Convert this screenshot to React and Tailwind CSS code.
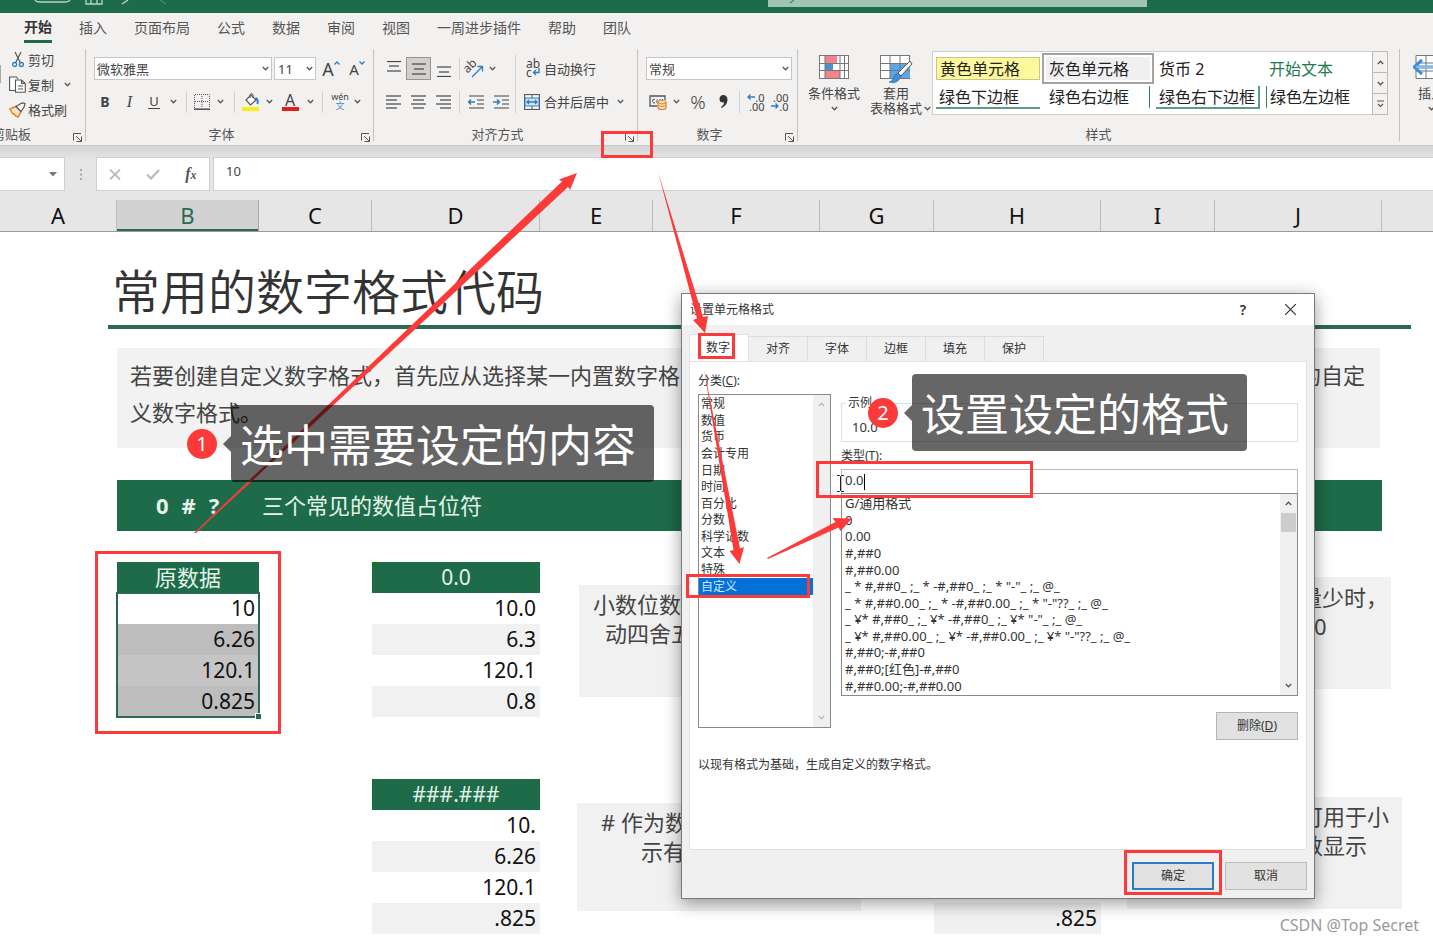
import React from "react";

const CJK = "font-['Noto_Sans','Noto_Sans_CJK_SC',sans-serif]";

function Chevron({ className = "w-3", up = false, color = "#555" }) {
  return (
    <span className={`flex shrink-0 items-center justify-center ${className}`}>
      <svg width="7" height="5" viewBox="0 0 7 5" fill="none" stroke={color} strokeWidth="1.3">
        <path d={up ? "M0.8 4L3.5 1.2L6.2 4" : "M0.8 1L3.5 3.8L6.2 1"} />
      </svg>
    </span>
  );
}

function Tool({ label, className = "w-6", children }) {
  return (
    <button aria-label={label} className={`flex h-[23px] shrink-0 items-center justify-center ${className}`}>
      {children}
    </button>
  );
}

function Sep({ className = "w-3" }) {
  return (
    <span className={`flex h-[22px] shrink-0 justify-center ${className}`}>
      <span className="w-px bg-[#d2d0ce]" />
    </span>
  );
}

function Launcher() {
  return (
    <button aria-label="更多选项" className="flex h-4 w-[16px] shrink-0 items-center justify-center pt-[8px]">
      <svg className="shrink-0" width="9" height="9" viewBox="0 0 9 9" fill="none" stroke="#555" strokeWidth="1">
        <path d="M0.5 7.5V0.5H8" />
        <path d="M3 3L8 8M8.5 3.5V8.5H3.5" />
      </svg>
    </button>
  );
}

function Group({ title, className = "", launcher = true, children }) {
  return (
    <section className={`flex h-[92px] shrink-0 flex-col justify-between border-r border-[#c4c2c0] ${className}`}>
      {children}
      <div className="flex h-[15px] items-center text-[13px] leading-4 text-[#555]">
        <span className="flex-1 text-center">{title}</span>
        {launcher && <Launcher />}
      </div>
    </section>
  );
}

function Lines({ rows }) {
  return (
    <svg width="16" height="16" viewBox="0 0 16 16" stroke="#444" strokeWidth="1.2">
      {rows.map(([y, a, b]) => (
        <path key={y} d={`M${a} ${y}H${b}`} />
      ))}
    </svg>
  );
}

const TABS = ["插入", "页面布局", "公式", "数据", "审阅", "视图", "一周进步插件", "帮助", "团队"];

function TitleBar() {
  return (
    <header className="flex h-[13px] shrink-0 items-start bg-[#1d6b48]">
      <svg className="ml-[34px] shrink-0" width="140" height="7" fill="none" stroke="#b9d6c6" strokeWidth="1.3">
        <path d="M1 0Q2 2 6 2H30Q35 2 36 0" />
        <path d="M52 0V4H68V0M57 4V0M63 4V0" />
        <path d="M88 4L94 0" />
        <path d="M126 0L132 4" stroke="#4a8a6b" />
      </svg>
      <div className="ml-[594px] flex h-[7px] w-[379px] shrink-0 bg-[#a0c5b1] pl-[22px]">
        <svg width="8" height="4" stroke="#1d6b48" strokeWidth="1"><path d="M0 3L4 0" /></svg>
      </div>
    </header>
  );
}

function MenuTabs() {
  return (
    <nav className="flex h-[30px] shrink-0 items-center gap-[27px] pl-[24px] text-[14px] text-[#555] whitespace-nowrap">
      <button className="flex h-full flex-col justify-between pt-1 font-bold text-[#333]">
        <span className="leading-5">开始</span>
        <span className="h-[3px] w-[28px] bg-[#1d6b48]" />
      </button>
      {TABS.map((t) => (
        <button key={t} className="leading-5">{t}</button>
      ))}
    </nav>
  );
}

function Clipboard() {
  return (
    <Group title="剪贴板" className="-ml-[46px] w-[132px]">
      <div className="flex pt-px text-[13px] text-[#444]">
        <svg className="mt-[15px] shrink-0" width="47" height="20"><path d="M46.500 0V18H30V0Z" fill="none" stroke="#aaa" /></svg>
        <div className="flex flex-col pl-[8px]">
          <button className="flex h-[25px] items-center gap-[4px] pl-[3px] leading-4 -mt-[3px]">
            <svg width="12" height="17" viewBox="0 0 12 17" fill="none">
              <path d="M3 1L8.500 12M9 1L3.500 12" stroke="#555" strokeWidth="1.2" />
              <circle cx="2.600" cy="13.500" r="2" stroke="#2b7cc0" strokeWidth="1.300" />
              <circle cx="9.400" cy="13.500" r="2" stroke="#2b7cc0" strokeWidth="1.300" />
            </svg>
            剪切
          </button>
          <button className="flex h-[25px] items-center gap-[2px] leading-4">
            <svg width="17" height="17" viewBox="0 0 17 17" fill="#fff" stroke="#555" strokeWidth="1.1">
              <path d="M6 14.500H0.600V1H7.500L9 3" />
              <path d="M6.500 4H12.500L16.300 7.500V16.300H6.500ZM12.500 4V7.500H16.300M9 10H14M9 13H14" />
            </svg>
            复制
            <Chevron className="ml-[6px] w-[10px]" />
          </button>
          <button className="flex h-[25px] items-center gap-[2px] leading-4">
            <svg width="17" height="16" viewBox="0 0 17 16">
              <path d="M1 7L7 4.500L12 9.500L9 15L6.500 14L5 12L3.500 11.500Z" fill="#fbe3c8" stroke="#e08326" strokeWidth="1.500" />
              <path d="M7 4.500L9.500 3L13 1L16 1.500L15 5L13.500 7.500L12 9.500Z" fill="#fff" stroke="#555" strokeWidth="1.200" />
            </svg>
            格式刷
          </button>
        </div>
      </div>
    </Group>
  );
}

function FontGroup() {
  return (
    <Group title="字体" className="w-[288px]">
      <div className="flex flex-col gap-[10px] pt-[8px] text-[#444]">
        <div className="flex h-[23px] items-center pl-[8px]">
          <button className="flex h-[23px] w-[178px] items-center justify-between border border-[#c8c6c4] bg-white pr-px pl-[2px] text-[13px] leading-4">
            微软雅黑 <Chevron className="w-[10px]" />
          </button>
          <button className="ml-[2px] flex h-[23px] w-[42px] items-center justify-between border border-[#c8c6c4] bg-white pr-px pl-[3px] text-[13px] leading-4">
            11 <Chevron className="w-[10px]" />
          </button>
          <Tool label="增大字号" className="w-[30px]">
            <span className="text-[18px] leading-5">A</span>
            <svg className="mb-3" width="6" height="4" fill="none" stroke="#2b7cc0" strokeWidth="1.300"><path d="M0.500 3.500L3 1L5.500 3.500" /></svg>
          </Tool>
          <Tool label="减小字号" className="w-[22px]">
            <span className="text-[15px] leading-4">A</span>
            <svg className="mb-3" width="6" height="4" fill="none" stroke="#2b7cc0" strokeWidth="1.300"><path d="M0.500 0.500L3 3L5.500 0.500" /></svg>
          </Tool>
        </div>
        <div className="flex h-[23px] items-center pl-[7px]">
          <Tool label="加粗"><span className="text-[14px] leading-5 font-bold">B</span></Tool>
          <Tool label="倾斜" className="w-[25px]"><span className="font-['Liberation_Serif',serif] text-[16px] leading-5 italic">I</span></Tool>
          <Tool label="下划线"><span className="border-b border-[#444] px-px text-[13px] leading-[14px]">U</span></Tool>
          <Chevron className="w-[14px]" />
          <Sep className="w-[13px]" />
          <Tool label="边框" className="w-[18px]">
            <svg width="16" height="16" viewBox="0 0 16 16" stroke="#555" fill="none">
              <path d="M0.500 14V0.500H15.500V14M8 2V14M1 7.500H15" strokeDasharray="1 1" />
              <path d="M0 15.200H16" strokeWidth="1.600" />
            </svg>
          </Tool>
          <Chevron className="w-[18px]" />
          <Sep className="w-[11px]" />
          <Tool label="填充颜色" className="w-[22px]">
            <svg width="18" height="18" viewBox="0 0 18 18" fill="none">
              <path d="M4 7L9 2L14 7L8.500 12Z" stroke="#555" strokeWidth="1.200" fill="#fff" />
              <path d="M8 5V1.500Q9.500 -0.500 11 1.500V5" stroke="#555" />
              <path d="M13.500 5Q16.500 6 15.500 11" stroke="#2b7cc0" strokeWidth="2" />
              <rect x="0" y="14" width="17" height="4" fill="#fbec1c" />
            </svg>
          </Tool>
          <Chevron className="w-[14px]" />
          <Tool label="字体颜色" className="w-[28px]">
            <span className="flex w-[17px] flex-col items-center">
              <span className="text-[16px] leading-[14px]">A</span>
              <span className="h-[4px] w-full bg-[#e0211b]" />
            </span>
          </Tool>
          <Chevron className="w-3" />
          <Sep className="w-[13px]" />
          <Tool label="拼音指南" className="w-[22px]">
            <span className="flex flex-col items-center">
              <span className="text-[9px] leading-[8px]">wén</span>
              <span className="text-[9px] leading-[9px] text-[#4a90cf]">文</span>
            </span>
          </Tool>
          <Chevron className="w-[12px]" />
        </div>
      </div>
    </Group>
  );
}

function Indent({ right }) {
  return (
    <svg width="16" height="16" viewBox="0 0 16 16" stroke="#444" strokeWidth="1.200" fill="none">
      <path d="M1 2H16M9 6H16M9 10H16M1 14H16" />
      <path d={right ? "M0 8H6M4 5.500L6.500 8L4 10.500" : "M7 8H1M3 5.500L0.500 8L3 10.500"} stroke="#2b7cc0" strokeWidth="1.500" />
    </svg>
  );
}

function AlignGroup() {
  return (
    <Group title="对齐方式" className="w-[264px]">
      <div className="flex pt-[6px] text-[13px] text-[#444]">
        <div className="flex w-[142px] flex-col gap-[10px] border-r border-[#d2d0ce] pt-[2px] pl-[7px]">
          <div className="flex h-[23px] items-center">
            <Tool label="顶端对齐" className="w-[25px]"><Lines rows={[[0.5, 1, 15], [5, 3, 13], [10, 1, 15]]} /></Tool>
            <Tool label="垂直居中" className="w-[25px] border border-[#979593] bg-[#d2d0ce]"><Lines rows={[[3, 1, 15], [8, 3, 13], [13, 1, 15]]} /></Tool>
            <Tool label="底端对齐" className="w-[25px]"><Lines rows={[[6, 1, 15], [11, 3, 13], [15.5, 1, 15]]} /></Tool>
            <Sep className="w-[7px]" />
            <Tool label="方向" className="w-[24px]">
              <svg className="overflow-visible" width="18" height="18" viewBox="0 0 18 18" fill="none">
                <text x="0" y="12" fontSize="12" fill="#444" transform="rotate(-45 3 11)">ab</text>
                <path d="M6 17L16 7M11.500 6.500H16.500V11.500" stroke="#2b7cc0" strokeWidth="1.300" />
              </svg>
            </Tool>
            <Chevron className="w-[10px]" />
          </div>
          <div className="flex h-[23px] items-center">
            <Tool label="左对齐" className="w-[25px]"><Lines rows={[[2, 0, 15], [6, 0, 11], [10, 0, 15], [14, 0, 11]]} /></Tool>
            <Tool label="居中" className="w-[25px]"><Lines rows={[[2, 0, 15], [6, 2, 13], [10, 0, 15], [14, 2, 13]]} /></Tool>
            <Tool label="右对齐" className="w-[25px]"><Lines rows={[[2, 0, 15], [6, 4, 15], [10, 0, 15], [14, 4, 15]]} /></Tool>
            <Sep className="w-[7px]" />
            <Tool label="减少缩进量" className="w-[25px]"><Indent /></Tool>
            <Tool label="增加缩进量" className="w-[25px]"><Indent right /></Tool>
          </div>
        </div>
        <div className="flex flex-col gap-[10px] pt-[2px] pl-[8px]">
          <button className="flex h-[23px] items-center gap-[3px] pl-[2px] leading-4">
            <span className="flex w-[15px] flex-col items-start text-[12px] leading-[9px]">
              <span className="leading-[8px]">ab</span>
              <span className="flex items-center leading-[9px]">
                c
                <svg width="8" height="9" viewBox="0 0 8 9" fill="none"><path d="M7 0V4.500H1.500M4 2L1.500 4.500L4 7" stroke="#2b7cc0" strokeWidth="1.400" /></svg>
              </span>
            </span>
            自动换行
          </button>
          <button className="flex h-[23px] items-center gap-[4px] leading-4">
            <svg width="16" height="16" viewBox="0 0 16 16" fill="none">
              <rect x="0.600" y="0.600" width="14.800" height="14.800" stroke="#555" fill="#fff" strokeWidth="1.100" />
              <rect x="1" y="4" width="14" height="8" fill="#d3e7f7" stroke="#2b7cc0" />
              <path d="M8 1V4M8 12V15" stroke="#555" />
              <path d="M3 8H13M5 6L3 8L5 10M11 6L13 8L11 10" stroke="#2b7cc0" strokeWidth="1.300" />
            </svg>
            合并后居中
            <Chevron className="ml-px w-[12px]" />
          </button>
        </div>
      </div>
    </Group>
  );
}

function Decimal({ more }) {
  const arrow = (
    <svg width="8" height="8" viewBox="0 0 8 8" fill="none" stroke="#2b7cc0" strokeWidth="1.300">
      <path d={more ? "M8 4H1M3.500 1.500L1 4L3.500 6.500" : "M0 4H7M4.500 1.500L7 4L4.500 6.500"} />
    </svg>
  );
  return (
    <span className="flex w-[17px] flex-col items-end text-[11px] leading-[9px]">
      <span className="flex items-center leading-[9px]">{more && arrow}{more ? ".0" : ".00"}</span>
      <span className="flex items-center leading-[9px]">{!more && arrow}{more ? ".00" : ".0"}</span>
    </span>
  );
}

function NumberGroup() {
  return (
    <Group title="数字" className="w-[160px]">
      <div className="flex flex-col gap-[10px] pt-[8px] pl-[8px] text-[13px] text-[#444]">
        <button className="flex h-[23px] w-[146px] items-center justify-between border border-[#c8c6c4] bg-white pr-px pl-[2px] leading-4">
          常规 <Chevron className="w-[10px]" />
        </button>
        <div className="flex h-[23px] items-center">
          <Tool label="会计数字格式">
            <svg width="18" height="16" viewBox="0 0 18 16" fill="none">
              <path d="M16 6V2H1V12H8" stroke="#555" strokeWidth="1.300" />
              <path d="M6 5.500Q3 5 3.500 7.500Q4 9.500 6 9M8 5.500V9M11 5V6M13.500 5V6" stroke="#555" />
              <path d="M9 8.500Q9 6.500 13 6.500Q17 6.500 17 8.500V13.500Q17 15.500 13 15.500Q9 15.500 9 13.500Z" fill="#fbe3c8" stroke="#e08326" strokeWidth="1.200" />
              <path d="M9 9Q13 11 17 9M9 11.500Q13 13.500 17 11.500" stroke="#e08326" />
            </svg>
          </Tool>
          <Chevron className="w-3" />
          <Tool label="百分比样式" className="w-8"><span className="text-[19px] leading-5 font-light">%</span></Tool>
          <Tool label="千位分隔样式" className="w-[18px]">
            <svg width="9" height="13" viewBox="0 0 9 13" fill="#333"><path d="M4 0Q8.500 0 8.500 5Q8 10.500 2.500 13L2 12Q5 10 5.300 7.500Q0.500 8 0.500 4Q0.800 0.300 4 0Z" /></svg>
          </Tool>
          <Sep className="w-[14px]" />
          <Tool label="增加小数位数" className="w-5"><Decimal more /></Tool>
          <Tool label="减少小数位数" className="w-7"><Decimal /></Tool>
        </div>
      </div>
    </Group>
  );
}

function CellStyle({ className = "", children }) {
  return <button className={`h-[23px] pl-[3px] text-left whitespace-nowrap ${className}`}>{children}</button>;
}

function StylesGroup() {
  return (
    <Group title="样式" launcher={false} className="w-[602px]">
      <div className="flex pt-[2px]">
        <button className="flex w-[72px] flex-col items-center pt-[4px] text-[13px] leading-[15px] text-[#444]">
          <svg width="30" height="24" viewBox="0 0 30 24" fill="none">
            <rect x="0.500" y="0.500" width="29" height="23" fill="#fff" stroke="#777" />
            <rect x="6" y="1" width="12" height="7" fill="#f4828b" />
            <rect x="6" y="9" width="8" height="6" fill="#4a90cf" />
            <rect x="6" y="16" width="15" height="7" fill="#f4828b" />
            <path d="M0 8.500H30M0 15.500H30M6 0V24M21 0V24M25.500 0V24" stroke="#777" />
          </svg>
          <span className="mt-[7px]">条件格式</span>
          <Chevron className="h-[15px] w-3" />
        </button>
        <button className="flex w-[62px] flex-col items-center pt-[4px] pr-[10px] text-[13px] leading-[15px] text-[#444] whitespace-nowrap">
          <svg className="shrink-0 overflow-visible" width="32" height="24" viewBox="0 0 32 24" fill="none">
            <rect x="0.500" y="0.500" width="29" height="23" fill="#fff" stroke="#777" />
            <rect x="10" y="8" width="20" height="15" fill="#5aa7e8" />
            <path d="M0 8.500H30M0 15.500H30M10 0V24M20 0V24" stroke="#777" />
            <path d="M30 6L18 18L21 21L32 9Z" fill="#f4f4f4" stroke="#555" />
            <path d="M18 18Q14 19 13 24Q11 27 9 27Q18 30 21 21Z" fill="#3e8fd8" stroke="#2b6fae" strokeWidth="0.600" />
          </svg>
          <span className="mt-[7px]">套用</span>
          <span className="flex">表格格式<Chevron className="-mr-[10px] w-[10px]" /></span>
        </button>
        <div className="flex h-[64px] w-[456px] border border-[#d0cecc] bg-white">
          <div className="grid flex-1 grid-cols-[repeat(4,104px)] content-start justify-start gap-[6px] pt-[5px] pl-[3px] text-[16px] leading-[18px] text-[#222]">
            <CellStyle className="border border-[#c9c68a] bg-[#fdf89b]">黄色单元格</CellStyle>
            <CellStyle className="bg-[#f1f0f1] outline-2 outline-offset-2 outline-[#a3a3a3]">灰色单元格</CellStyle>
            <CellStyle>货币 2</CellStyle>
            <CellStyle className="text-[#1d7a50]">开始文本</CellStyle>
            <CellStyle className="border-b-2 border-[#5c9c84]">绿色下边框</CellStyle>
            <CellStyle className="border-r border-b-2 border-r-[#2f8062] border-b-white">绿色右边框</CellStyle>
            <CellStyle className="border-r-2 border-b-2 border-[#5c9c84]">绿色右下边框</CellStyle>
            <CellStyle className="border-b-2 border-l border-b-white border-l-[#2f8062]">绿色左边框</CellStyle>
          </div>
          <div className="-my-px -mr-px flex w-[16px] flex-col border border-[#bdbbb9] bg-[#f3f2f1]">
            <button aria-label="上一行" className="flex flex-1 justify-center border-b border-[#bdbbb9]"><Chevron up className="w-3" /></button>
            <button aria-label="下一行" className="flex flex-1 justify-center border-b border-[#bdbbb9]"><Chevron className="w-3" /></button>
            <button aria-label="其他样式" className="flex flex-1 items-center justify-center">
              <svg width="7" height="8" fill="none" stroke="#555" strokeWidth="1.200"><path d="M0 1H7M1 4L3.500 6.500L6 4" /></svg>
            </button>
          </div>
        </div>
      </div>
    </Group>
  );
}

function CellsGroup() {
  return (
    <section className="flex flex-1 justify-start overflow-hidden pl-[13px]">
      <button className="flex w-9 shrink-0 flex-col items-center pt-[6px] text-[13px] leading-[15px] text-[#444] whitespace-nowrap">
        <svg width="36" height="24" viewBox="0 0 36 24" fill="none">
          <path d="M3 0.500H35V23.500H3ZM3 8H35M3 16H35M13 0V24M24 0V24" stroke="#777" fill="#fff" />
          <path d="M1 12H34M9 5L1 12L9 19" stroke="#3e8fd8" strokeWidth="3" />
          <path d="M3 12H34" stroke="#cfe5f7" />
        </svg>
        <span className="mt-[7px]">插入</span>
        <Chevron className="h-[15px] w-3" />
      </button>
    </section>
  );
}

function FormulaBar() {
  return (
    <div className="flex shrink-0 bg-linear-to-b from-[#d4d4d4] via-[#e6e6e6] via-30% to-[#e6e6e6] pt-[11px]">
      <div className="flex h-[34px] w-[65px] items-center justify-end border border-l-0 border-[#cfcfcf] bg-white pr-[7px]">
        <svg width="8" height="5" fill="#777"><path d="M0 0H8L4 4.500Z" /></svg>
      </div>
      <div className="flex w-[31px] items-center justify-center">
        <svg width="2" height="11" fill="#aaa"><path d="M0 0H2V2H0ZM0 4.500H2V6.500H0ZM0 9H2V11H0Z" /></svg>
      </div>
      <div className="flex h-[34px] w-[114px] items-center justify-around border border-[#cfcfcf] bg-white">
        <button aria-label="取消输入"><svg width="12" height="11" stroke="#bbb" strokeWidth="1.800"><path d="M1 0.500L11 10.500M11 0.500L1 10.500" /></svg></button>
        <button aria-label="确认输入"><svg width="14" height="11" fill="none" stroke="#bbb" strokeWidth="2.200"><path d="M1 5.500L5 9.500L13 1" /></svg></button>
        <button aria-label="插入函数" className="font-['Liberation_Serif',serif] text-[16px] leading-5 font-bold text-[#555] italic">f<span className="text-[12px]">x</span></button>
      </div>
      <input aria-label="编辑栏" defaultValue="10" className="ml-[3px] h-[34px] min-w-0 flex-1 border border-r-0 border-[#cfcfcf] bg-white pb-[6px] pl-3 text-[13px] text-[#444] outline-none" />
    </div>
  );
}

const COLS = [
  ["A", "w-[117px]"], ["B", "w-[142px]"], ["C", "w-[113px]"], ["D", "w-[168px]"], ["E", "w-[113px]"],
  ["F", "w-[167px]"], ["G", "w-[114px]"], ["H", "w-[167px]"], ["I", "w-[114px]"], ["J", "w-[167px]"],
];

function ColumnHeads() {
  return (
    <div className="flex shrink-0 border-b border-[#9b9b9b] bg-[#e6e6e6] pt-[9px] text-[22px] leading-[31px] text-[#111]">
      {COLS.map(([c, w]) => (
        <div
          key={c}
          className={`h-[31px] shrink-0 border-r text-center ${w} ${c === "B" ? "border-[#a9a9a9] bg-[#d2d2d2] text-[#2c6a50] shadow-[inset_0_-2px_0_#2c6a50]" : "border-[#bcbcbc]"}`}
        >
          {c}
        </div>
      ))}
      <div className="flex-1" />
    </div>
  );
}

function Sample({ head, rows, className = "", flag = false }) {
  return (
    <table className={`table-fixed shrink-0 border-collapse text-[21px] leading-[31px] text-[#111] ${className}`}>
      <thead>
        <tr>
          <th className="relative h-[31px] bg-[#1d6b48] p-0 font-normal text-[#e4f3ea]">
            {flag && <svg className="absolute top-0 left-0" width="7" height="7" fill="#0c7a1c"><path d="M0 0H7L0 7Z" /></svg>}
            {head}
          </th>
        </tr>
      </thead>
      <tbody>
        {rows.map((r, i) => (
          <tr key={r}>
            <td className={`h-[31px] p-0 pr-1 text-right ${i % 2 ? "bg-[#f1f1f1]" : "bg-white"}`}>{r}</td>
          </tr>
        ))}
      </tbody>
    </table>
  );
}

function Source() {
  const fills = ["bg-white", "bg-[#bdbdbd]", "bg-[#c5c5c5]", "bg-[#bdbdbd]"];
  return (
    <div className="relative shrink-0">
      <table className="w-[142px] table-fixed border-collapse text-[21px] leading-[31px] text-[#111]">
        <thead>
          <tr><th className="h-[31px] bg-[#1d6b48] p-0 text-[22px] font-normal text-[#e4f3ea]">原数据</th></tr>
        </thead>
        <tbody className="relative outline-2 -outline-offset-1 outline-[#2c6a50]">
          {["10", "6.26", "120.1", "0.825"].map((v, i) => (
            <tr key={v}><td className={`h-[31px] p-0 pr-1 text-right ${fills[i]}`}>{v}</td></tr>
          ))}
        </tbody>
      </table>
      <span className="absolute -right-[3px] -bottom-[3px] size-[7px] border border-white bg-[#2c6a50]" />
    </div>
  );
}

function Note({ className, children }) {
  return <div className={`shrink-0 bg-[#f1f1f1] text-[22px] leading-[29px] text-[#444] whitespace-nowrap ${className}`}>{children}</div>;
}

function Sheet() {
  return (
    <main className="flex min-h-0 flex-1 flex-col overflow-hidden bg-white pt-[24px] whitespace-nowrap">
      <h1 className="ml-[108px] mr-[22px] h-[73px] border-b-4 border-[#2c6a50] pl-[4px] font-['Noto_Sans_CJK_SC',sans-serif] text-[48px] leading-[66px] font-[350] text-[#333]">常用的数字格式代码</h1>
      <div className="mt-[19px] mr-[53px] ml-[117px] flex h-[100px] shrink-0 justify-between bg-[#f2f2f2] pt-[9px] pr-[15px] pl-[13px] text-[22px] leading-[37px] text-[#444]">
        <p>若要创建自定义数字格式，首先应从选择某一内置数字格<br />义数字格式。</p>
        <p>的自定</p>
      </div>
      <div className="mt-[32px] mr-[51px] ml-[117px] flex h-[51px] shrink-0 items-center bg-[#1d6b48] text-[22px] text-[#e4f3ea]">
        <span className="flex w-[145px] gap-[13px] pl-[39px] font-bold"><span>0</span><span>#</span><span>?</span></span>
        <span>三个常见的数值占位符</span>
      </div>
      <div className="mt-[31px] flex shrink-0 items-start pl-[117px]">
        <Source />
        <Sample flag head="0.0" rows={["10.0", "6.3", "120.1", "0.8"]} className="ml-[113px] w-[168px]" />
        <Note className="mt-[23px] ml-[39px] h-[112px] w-[282px] pt-[5px] pl-[14px]">小数位数<br /><span className="pl-[12px]">动四舍五</span></Note>
        <Note className="mt-[15px] ml-[266px] h-[112px] w-[264px] pt-[6px] pl-[173px]">量少时，<br /><span className="pl-[14px]">0</span></Note>
      </div>
      <div className="mt-[62px] flex shrink-0 items-start pl-[372px]">
        <Sample head="###.###" rows={["10.", "6.26", "120.1", ".825"]} className="w-[168px]" />
        <Note className="mt-[24px] ml-[37px] h-[108px] w-[284px] pt-[5px] pl-[24px]"># 作为数<br /><span className="pl-[40px]">示有</span></Note>
        <div className="mt-[124px] ml-[73px] h-[31px] w-[167px] shrink-0 bg-[#f1f1f1] pr-1 text-right text-[21px] leading-[31px] text-[#111]">.825</div>
        <Note className="mt-[18px] ml-[26px] h-[112px] w-[275px] pt-[5px] pl-[174px]">可用于小<br />数显示</Note>
      </div>
    </main>
  );
}

const CATEGORIES = ["常规", "数值", "货币", "会计专用", "日期", "时间", "百分比", "分数", "科学记数", "文本", "特殊", "自定义"];
const FORMATS = [
  "G/通用格式", "0", "0.00", "#,##0", "#,##0.00",
  '_ * #,##0_ ;_ * -#,##0_ ;_ * "-"_ ;_ @_ ',
  '_ * #,##0.00_ ;_ * -#,##0.00_ ;_ * "-"??_ ;_ @_ ',
  '_ ¥* #,##0_ ;_ ¥* -#,##0_ ;_ ¥* "-"_ ;_ @_ ',
  '_ ¥* #,##0.00_ ;_ ¥* -#,##0.00_ ;_ ¥* "-"??_ ;_ @_ ',
  "#,##0;-#,##0", "#,##0;[红色]-#,##0", "#,##0.00;-#,##0.00",
];

function ScrollBar({ thumb, color }) {
  return (
    <div className="flex w-[17px] shrink-0 flex-col items-center justify-between bg-[#f0f0f0]">
      <div className="flex w-full flex-col items-center">
        <Chevron up color={color} className="h-[19px] w-full" />
        {thumb && <div className="h-[19px] w-[15px] bg-[#cdcdcd]" />}
      </div>
      <Chevron color={color} className="h-[19px] w-full" />
    </div>
  );
}

function Dialog() {
  return (
    <div role="dialog" aria-label="设置单元格格式" className="absolute top-[293px] left-[681px] w-[634px] border border-[#7a7a7a] bg-[#f0f0f0] text-[12px] text-[#333] shadow-[0_4px_16px_rgba(0,0,0,0.4)]">
      <div className="flex h-[31px] items-center bg-white pl-[8px]">
        <span className="flex-1 leading-4">设置单元格格式</span>
        <button aria-label="帮助" className="w-[46px] text-[14px] font-semibold">?</button>
        <button aria-label="关闭" className="flex w-[48px] justify-center"><svg width="11" height="11" stroke="#333" strokeWidth="1.200"><path d="M0 0L11 11M11 0L0 11" /></svg></button>
      </div>
      <div className="flex items-end pt-[9px] pl-[7px]">
        <button className="h-[27px] w-[60px] border border-b-0 border-[#e2e2e2] bg-white pr-[2px]">数字</button>
        {["对齐", "字体", "边框", "填充", "保护"].map((t) => (
          <button key={t} className="h-[25px] w-[59px] border border-b-0 border-l-0 border-[#dcdcdc] bg-[#f0f0f0]">{t}</button>
        ))}
      </div>
      <div className="mx-[7px] h-[489px] border border-[#e2e2e2] bg-white px-[8px] pt-[10px]">
        <div className="flex gap-[10px]">
          <div className="w-[133px]">
            <div id="cat" className="h-[22px] leading-[18px]">分类(<u>C</u>):</div>
            <div className="flex h-[334px] border border-[#8a8a8a]">
              <ul role="listbox" aria-labelledby="cat" className="flex h-[200px] flex-1 flex-col pt-px">
                {CATEGORIES.map((c) => (
                  <li key={c} role="option" aria-selected={c === "自定义"} className={`flex flex-1 items-center pl-[2px] leading-4 ${c === "自定义" ? "bg-[#0372d8] text-[#cfe6ff]" : ""}`}>{c}</li>
                ))}
              </ul>
              <ScrollBar color="#bbb" />
            </div>
          </div>
          <div className="flex min-w-0 flex-1 flex-col pt-[23px]">
            <fieldset className="h-[47px] border border-[#e0e0e0] pl-[10px]">
              <legend className="-ml-[6px] px-[2px] leading-4">示例</legend>
              <span className="block pt-[8px] text-[13px] leading-4">10.0</span>
            </fieldset>
            <label htmlFor="fmt" className="h-[27px] leading-[27px]">类型(<u>T</u>):</label>
            <div className="flex h-[25px] items-center border border-[#bbb] bg-white pl-[3px]">
              <input id="fmt" defaultValue="0.0" className="h-[20px] w-[19px] pb-[3px] text-[13px] outline-none" />
              <span className="h-[16px] w-px bg-black" />
            </div>
            <div className="-mt-px flex h-[203px] border border-[#8a8a8a]">
              <ul role="listbox" aria-label="类型" className="flex h-[200px] flex-1 flex-col pt-px text-[13px]">
                {FORMATS.map((f) => (
                  <li key={f} role="option" aria-selected="false" className="flex flex-1 items-center pl-[3px] leading-4 whitespace-pre">{f}</li>
                ))}
              </ul>
              <ScrollBar thumb color="#555" />
            </div>
            <button className="mt-[16px] h-[28px] w-[82px] self-end border border-[#b5b5b5] bg-[#e1e1e1]">删除(<u>D</u>)</button>
          </div>
        </div>
        <p className="mt-[15px] leading-5">以现有格式为基础，生成自定义的数字格式。</p>
      </div>
      <div className="flex justify-end gap-[11px] pt-[12px] pr-[7px] pb-[8px]">
        <button className="h-[28px] w-[82px] border-2 border-[#2b7cc4] bg-[#e1e1e1]">确定</button>
        <button className="h-[28px] w-[82px] border border-[#bcbcbc] bg-[#e1e1e1]">取消</button>
      </div>
    </div>
  );
}

function Mark({ className }) {
  return <div className={`pointer-events-none absolute border-3 border-[#fc3a3a] ${className}`} />;
}

function Callout({ n, className, children }) {
  return (
    <div className={`absolute flex h-[77px] items-center ${className}`}>
      <span className="flex size-[30px] items-center justify-center rounded-full bg-[#fc3a3a] text-[20px] leading-5 text-white">{n}</span>
      <svg className="ml-[6px]" width="8" height="16" fill="#000" fillOpacity="0.6"><path d="M8 0V16L0 8Z" /></svg>
      <span className="h-full rounded-[4px] bg-black/60 pr-[18px] pl-[9px] font-['Noto_Sans_CJK_SC',sans-serif] text-[44px] leading-[77px] whitespace-nowrap text-white">{children}</span>
    </div>
  );
}

function Annotations() {
  return (
    <>
      <svg className="pointer-events-none absolute top-0 left-0" width="900" height="600" viewBox="0 0 900 600" fill="#fc3a3a">
        <path d="M194 533L562 181.500L559 179.500L577 173L570 190L568 187L196 533Z" />
        <path d="M658 172L703 317L708 316L705 333L693 320L697 318.500Z" />
        <path d="M704 369L740 548.500L744 547L739.500 564L729.500 551L733.500 550Z" />
        <path d="M767 558L835.500 522L832.500 518L852 518.500L840.500 531L838.500 527.500L768 559Z" />
      </svg>
      <svg className="pointer-events-none absolute top-[475px] left-[836px]" width="9" height="17" fill="none" stroke="#222"><path d="M1 0.500H3.500L4.500 1.500L5.500 0.500H8M4.500 1.500V15.500M1 16.500H3.500L4.500 15.500L5.500 16.500H8" /></svg>
      <Mark className="top-[131px] left-[601px] h-[27px] w-[52px]" />
      <Mark className="top-[551px] left-[95px] h-[183px] w-[186px]" />
      <Mark className="top-[333px] left-[698px] h-[26px] w-[37px]" />
      <Mark className="top-[574px] left-[686px] h-[24px] w-[124px]" />
      <Mark className="top-[461px] left-[816px] h-[37px] w-[217px]" />
      <Mark className="top-[850px] left-[1124px] h-[45px] w-[98px]" />
      <Callout n="1" className="top-[405px] left-[187px]">选中需要设定的内容</Callout>
      <Callout n="2" className="top-[374px] left-[868px]">设置设定的格式</Callout>
      <div className="absolute right-[14px] bottom-[8px] text-[16px] leading-5 text-[#999]">CSDN @Top Secret</div>
    </>
  );
}

export default function App() {
  return (
    <div className={`relative flex h-screen flex-col overflow-hidden bg-white ${CJK}`}>
      <TitleBar />
      <div className="shrink-0 border-b border-[#c9c9c9] bg-[#f3f1f0] pb-[4px]">
        <MenuTabs />
        <div className="mt-[6px] flex">
          <Clipboard />
          <FontGroup />
          <AlignGroup />
          <NumberGroup />
          <StylesGroup />
          <CellsGroup />
        </div>
      </div>
      <FormulaBar />
      <ColumnHeads />
      <Sheet />
      <Dialog />
      <Annotations />
    </div>
  );
}
